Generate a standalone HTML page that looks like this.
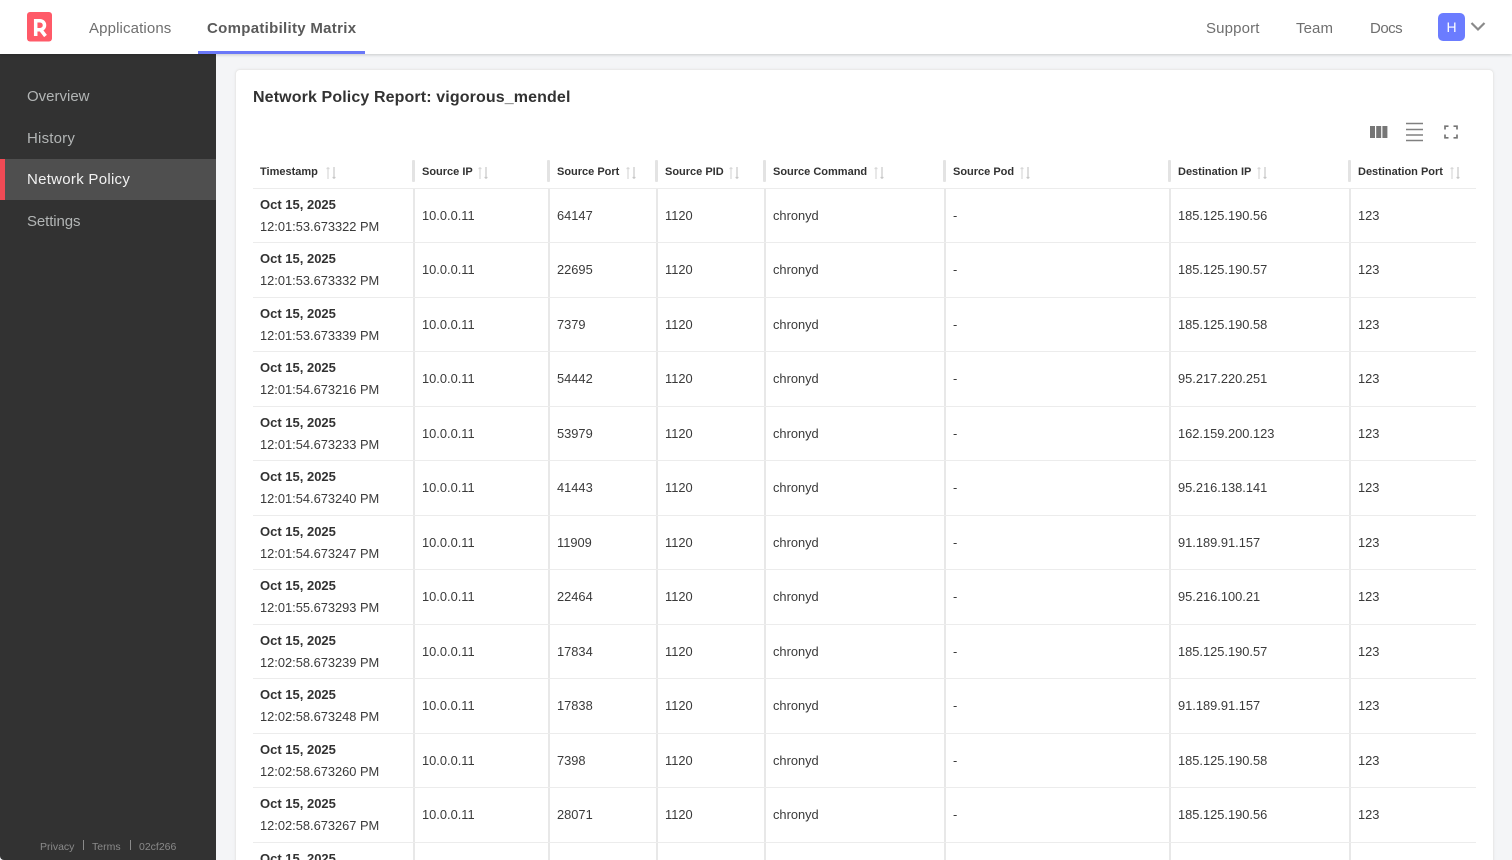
<!DOCTYPE html>
<html><head><meta charset="utf-8"><title>Network Policy</title>
<style>
html,body{margin:0;padding:0;width:1512px;height:860px;overflow:hidden;background:#f4f5f7;font-family:"Liberation Sans",sans-serif;color:#323232}
#root{position:absolute;left:0;top:0;width:1512px;height:860px;overflow:hidden;background:#f4f5f7}
.a{position:absolute;white-space:nowrap}
#top{position:absolute;left:0;top:0;width:1512px;height:54px;background:#fff;box-shadow:0 1px 3px rgba(0,0,0,.18);z-index:3}
.nav{position:absolute;top:18.500px;font-size:15px;line-height:20px;color:#6f6f6f;white-space:nowrap}
#side{position:absolute;left:0;top:54px;width:216px;height:806px;background:#323232;border-bottom-left-radius:4px;z-index:2}
.si{position:absolute;left:27px;font-size:15px;line-height:20px;color:#b2b5b5}
#card{position:absolute;left:235px;top:69px;width:1257px;height:820px;background:#fff;border:1px solid #eaeaea;border-radius:5px;box-shadow:0 0 3px rgba(0,0,0,.05)}
#tbl{position:absolute;left:253px;top:155px;width:1223px}
.h,.r{display:flex;width:1223px;box-sizing:border-box;border-bottom:1px solid #ececec}
.h{height:33.5px;font-size:11px;font-weight:bold;line-height:34px;position:relative;color:#323232}
.r{height:54.5px;font-size:12.85px;color:#3a3a3a;line-height:53px}
.c{box-sizing:border-box;padding-left:7px;white-space:nowrap;border-left:2px solid #e8e8e8;flex:none}
.h .c{border-left:0;padding-left:9px;position:relative}
.h .c:not(:first-child)::before{content:"";position:absolute;left:-1px;top:5px;width:3px;height:22px;background:#e3e3e3;border-radius:1px}
.c:first-child{border-left:0;padding-left:7px}
.w1{width:160px}.w2{width:135px}.w3{width:108px}.w4{width:108px}.w5{width:180px}.w6{width:225px}.w7{width:180px}.w8{width:127px}
.ts{line-height:22px;padding-top:5.300px}
.ts b{display:block;font-size:13px;color:#323232}
.h svg{position:absolute;top:11px}
</style></head>
<body>
<div id="root">
<div id="top">
  <svg class="a" style="left:27px;top:12px" width="26" height="30" viewBox="0 0 26 30"><rect x="0" y="0" width="25" height="29.5" rx="3" fill="#ff5a68"/><path d="M8.700 24V8.700h4.300a4.400 4.400 0 0 1 0 9H8.700M13.500 17.500L18.500 24" fill="none" stroke="#fff" stroke-width="3.500"/></svg>
  <div class="nav" style="left:89px;letter-spacing:.13px">Applications</div>
  <div class="nav" style="left:207px;font-weight:bold;color:#5a5a5a;letter-spacing:.3px">Compatibility Matrix</div>
  <div class="a" style="left:198px;top:51px;width:167px;height:3px;background:#6a78f8"></div>
  <div class="nav" style="left:1206px;letter-spacing:.15px">Support</div>
  <div class="nav" style="left:1296px;letter-spacing:.1px">Team</div>
  <div class="nav" style="left:1370px;letter-spacing:-.5px">Docs</div>
  <div class="a" style="left:1438px;top:13px;width:27px;height:28px;background:#6b7cff;border-radius:5px;color:#fff;font-size:14px;line-height:28px;text-align:center">H</div>
  <svg class="a" style="left:1470px;top:21px" width="16" height="11" viewBox="0 0 16 11"><path d="M1.500 2L8 8.500 14.500 2" fill="none" stroke="#8a8a8a" stroke-width="2.200"/></svg>
</div>
<div id="side">
  <div class="si" style="top:33px">Overview</div>
  <div class="si" style="top:75px;letter-spacing:.2px">History</div>
  <div class="a" style="left:0;top:104.500px;width:216px;height:41.5px;background:#4f4f4f"></div>
  <div class="a" style="left:0;top:104.500px;width:5px;height:41.5px;background:#f04a55"></div>
  <div class="si" style="top:116px;color:#f2f2f2;letter-spacing:.28px">Network Policy</div>
  <div class="si" style="top:158px;letter-spacing:-.1px">Settings</div>
  <div class="a" style="left:40px;top:786px;font-size:10.500px;line-height:14px;color:#8a8a8a">Privacy</div>
  <div class="a" style="left:83px;top:786px;width:1px;height:10px;background:#8a8a8a"></div>
  <div class="a" style="left:92px;top:786px;font-size:10.500px;line-height:14px;color:#8a8a8a">Terms</div>
  <div class="a" style="left:130px;top:786px;width:1px;height:10px;background:#8a8a8a"></div>
  <div class="a" style="left:139px;top:786px;font-size:10.500px;line-height:14px;color:#8a8a8a">02cf266</div>
</div>
<div id="card"></div>
<div class="a" style="left:253px;top:87px;font-size:16px;line-height:21px;font-weight:bold;color:#323232;letter-spacing:.12px">Network Policy Report: vigorous_mendel</div>
<svg class="a" style="left:1370px;top:126px" width="18" height="12" viewBox="0 0 18 12"><path d="M0 0h5v12H0zM6.200 0h5v12h-5zM12.400 0h5v12h-5z" fill="#767676"/></svg>
<svg class="a" style="left:1406px;top:122px" width="18" height="20" viewBox="0 0 18 20"><path d="M0 1.500h17M0 7.500h17M0 13h17M0 18.500h17" fill="none" stroke="#808080" stroke-width="1.600"/></svg>
<svg class="a" style="left:1444px;top:125px" width="14" height="14" viewBox="0 0 14 14"><path d="M1 4.500V1.200h3.500M9.500 1.200H13v3.300M13 9.500v3.300H9.500M4.500 12.800H1V9.500" fill="none" stroke="#767676" stroke-width="1.700"/></svg>
<div id="tbl">
<div class="h">
<div class="c w1">Timestamp<svg style="left:72px" width="12" height="14" viewBox="0 0 12 14"><path d="M3 13V1M1.500 2.500H4.500" fill="none" stroke="#d8d8d8" stroke-width="1.200"/><path d="M9 1v12M7.500 11.500h3" fill="none" stroke="#c8c8c8" stroke-width="1.200"/></svg></div>
<div class="c w2">Source IP<svg style="left:64px" width="12" height="14" viewBox="0 0 12 14"><path d="M3 13V1M1.500 2.500H4.500" fill="none" stroke="#d8d8d8" stroke-width="1.200"/><path d="M9 1v12M7.500 11.500h3" fill="none" stroke="#c8c8c8" stroke-width="1.200"/></svg></div>
<div class="c w3">Source Port<svg style="left:77px" width="12" height="14" viewBox="0 0 12 14"><path d="M3 13V1M1.500 2.500H4.500" fill="none" stroke="#d8d8d8" stroke-width="1.200"/><path d="M9 1v12M7.500 11.500h3" fill="none" stroke="#c8c8c8" stroke-width="1.200"/></svg></div>
<div class="c w4">Source PID<svg style="left:72px" width="12" height="14" viewBox="0 0 12 14"><path d="M3 13V1M1.500 2.500H4.500" fill="none" stroke="#d8d8d8" stroke-width="1.200"/><path d="M9 1v12M7.500 11.500h3" fill="none" stroke="#c8c8c8" stroke-width="1.200"/></svg></div>
<div class="c w5">Source Command<svg style="left:109px" width="12" height="14" viewBox="0 0 12 14"><path d="M3 13V1M1.500 2.500H4.500" fill="none" stroke="#d8d8d8" stroke-width="1.200"/><path d="M9 1v12M7.500 11.500h3" fill="none" stroke="#c8c8c8" stroke-width="1.200"/></svg></div>
<div class="c w6">Source Pod<svg style="left:75px" width="12" height="14" viewBox="0 0 12 14"><path d="M3 13V1M1.500 2.500H4.500" fill="none" stroke="#d8d8d8" stroke-width="1.200"/><path d="M9 1v12M7.500 11.500h3" fill="none" stroke="#c8c8c8" stroke-width="1.200"/></svg></div>
<div class="c w7">Destination IP<svg style="left:87px" width="12" height="14" viewBox="0 0 12 14"><path d="M3 13V1M1.500 2.500H4.500" fill="none" stroke="#d8d8d8" stroke-width="1.200"/><path d="M9 1v12M7.500 11.500h3" fill="none" stroke="#c8c8c8" stroke-width="1.200"/></svg></div>
<div class="c w8">Destination Port<svg style="left:100px" width="12" height="14" viewBox="0 0 12 14"><path d="M3 13V1M1.500 2.500H4.500" fill="none" stroke="#d8d8d8" stroke-width="1.200"/><path d="M9 1v12M7.500 11.500h3" fill="none" stroke="#c8c8c8" stroke-width="1.200"/></svg></div>
</div>
<div class="r"><div class="c w1 ts"><b>Oct 15, 2025</b>12:01:53.673322 PM</div><div class="c w2">10.0.0.11</div><div class="c w3">64147</div><div class="c w4">1120</div><div class="c w5">chronyd</div><div class="c w6">-</div><div class="c w7">185.125.190.56</div><div class="c w8">123</div></div>
<div class="r"><div class="c w1 ts"><b>Oct 15, 2025</b>12:01:53.673332 PM</div><div class="c w2">10.0.0.11</div><div class="c w3">22695</div><div class="c w4">1120</div><div class="c w5">chronyd</div><div class="c w6">-</div><div class="c w7">185.125.190.57</div><div class="c w8">123</div></div>
<div class="r"><div class="c w1 ts"><b>Oct 15, 2025</b>12:01:53.673339 PM</div><div class="c w2">10.0.0.11</div><div class="c w3">7379</div><div class="c w4">1120</div><div class="c w5">chronyd</div><div class="c w6">-</div><div class="c w7">185.125.190.58</div><div class="c w8">123</div></div>
<div class="r"><div class="c w1 ts"><b>Oct 15, 2025</b>12:01:54.673216 PM</div><div class="c w2">10.0.0.11</div><div class="c w3">54442</div><div class="c w4">1120</div><div class="c w5">chronyd</div><div class="c w6">-</div><div class="c w7">95.217.220.251</div><div class="c w8">123</div></div>
<div class="r"><div class="c w1 ts"><b>Oct 15, 2025</b>12:01:54.673233 PM</div><div class="c w2">10.0.0.11</div><div class="c w3">53979</div><div class="c w4">1120</div><div class="c w5">chronyd</div><div class="c w6">-</div><div class="c w7">162.159.200.123</div><div class="c w8">123</div></div>
<div class="r"><div class="c w1 ts"><b>Oct 15, 2025</b>12:01:54.673240 PM</div><div class="c w2">10.0.0.11</div><div class="c w3">41443</div><div class="c w4">1120</div><div class="c w5">chronyd</div><div class="c w6">-</div><div class="c w7">95.216.138.141</div><div class="c w8">123</div></div>
<div class="r"><div class="c w1 ts"><b>Oct 15, 2025</b>12:01:54.673247 PM</div><div class="c w2">10.0.0.11</div><div class="c w3">11909</div><div class="c w4">1120</div><div class="c w5">chronyd</div><div class="c w6">-</div><div class="c w7">91.189.91.157</div><div class="c w8">123</div></div>
<div class="r"><div class="c w1 ts"><b>Oct 15, 2025</b>12:01:55.673293 PM</div><div class="c w2">10.0.0.11</div><div class="c w3">22464</div><div class="c w4">1120</div><div class="c w5">chronyd</div><div class="c w6">-</div><div class="c w7">95.216.100.21</div><div class="c w8">123</div></div>
<div class="r"><div class="c w1 ts"><b>Oct 15, 2025</b>12:02:58.673239 PM</div><div class="c w2">10.0.0.11</div><div class="c w3">17834</div><div class="c w4">1120</div><div class="c w5">chronyd</div><div class="c w6">-</div><div class="c w7">185.125.190.57</div><div class="c w8">123</div></div>
<div class="r"><div class="c w1 ts"><b>Oct 15, 2025</b>12:02:58.673248 PM</div><div class="c w2">10.0.0.11</div><div class="c w3">17838</div><div class="c w4">1120</div><div class="c w5">chronyd</div><div class="c w6">-</div><div class="c w7">91.189.91.157</div><div class="c w8">123</div></div>
<div class="r"><div class="c w1 ts"><b>Oct 15, 2025</b>12:02:58.673260 PM</div><div class="c w2">10.0.0.11</div><div class="c w3">7398</div><div class="c w4">1120</div><div class="c w5">chronyd</div><div class="c w6">-</div><div class="c w7">185.125.190.58</div><div class="c w8">123</div></div>
<div class="r"><div class="c w1 ts"><b>Oct 15, 2025</b>12:02:58.673267 PM</div><div class="c w2">10.0.0.11</div><div class="c w3">28071</div><div class="c w4">1120</div><div class="c w5">chronyd</div><div class="c w6">-</div><div class="c w7">185.125.190.56</div><div class="c w8">123</div></div>
<div class="r"><div class="c w1 ts"><b>Oct 15, 2025</b></div><div class="c w2"></div><div class="c w3"></div><div class="c w4"></div><div class="c w5"></div><div class="c w6"></div><div class="c w7"></div><div class="c w8"></div></div>
</div>
</div>
</body></html>
